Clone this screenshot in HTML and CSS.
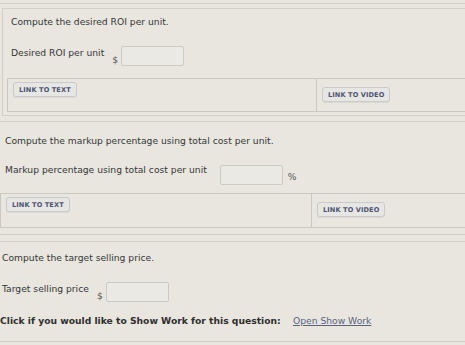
FILE: index.html
```html
<!DOCTYPE html>
<html lang="en">
<head>
  <meta charset="UTF-8" />
  <meta name="viewport" content="width=device-width, initial-scale=1" />
  <title>Question Parts</title>
  <link rel="stylesheet" href="styles.css">
</head>
<body>
  <div class="top-rule"></div>

  <div class="part part-first">
    <p class="q">Compute the desired ROI per unit.</p>
    <div class="field-row">
      <label for="roi">Desired ROI per unit</label>
      <span class="unit unit-pre">$</span>
      <input type="text" id="roi" />
    </div>
    <div class="links">
      <div class="cell cell-text"><button type="button">LINK TO TEXT</button></div>
      <div class="cell cell-video"><button type="button">LINK TO VIDEO</button></div>
    </div>
  </div>
  <div class="sep"></div>

  <div class="part part-second">
    <p class="q">Compute the markup percentage using total cost per unit.</p>
    <div class="field-row">
      <label for="markup">Markup percentage using total cost per unit</label>
      <input type="text" id="markup" class="input-markup" />
      <span class="unit unit-post">%</span>
    </div>
    <div class="links">
      <div class="cell cell-text"><button type="button">LINK TO TEXT</button></div>
      <div class="cell cell-video"><button type="button">LINK TO VIDEO</button></div>
    </div>
  </div>
  <div class="sep sep-double"></div>

  <div class="part part-third">
    <p class="q">Compute the target selling price.</p>
    <div class="field-row">
      <label for="price">Target selling price</label>
      <span class="unit unit-pre">$</span>
      <input type="text" id="price" />
    </div>
    <p class="show-work">Click if you would like to Show Work for this question: <a href="#">Open Show Work</a></p>
  </div>
  <div class="bottom-rule"></div>
</body>
</html>
```

FILE: styles.css
```css
body {
  margin: 0;
  background: #e8e6df;
  color: #363636;
  font-family: "DejaVu Sans", Verdana, sans-serif;
  font-size: 9.2px;
  line-height: 12px;
  overflow: hidden;
}
.top-rule {
  height: 3px;
  border-bottom: 1px solid #cfcfca;
}
p {
  margin: 0;
}
.part {
  padding: 0 0 0 4px;
}
.part-first {
  margin: 4px 0 0 2px;
  border: 1px solid #d0d0ca;
  border-right: none;
  padding-top: 7px;
  padding-bottom: 3px;
}
.part-second {
  padding-top: 13px;
  padding-left: 2px;
}
.part-third {
  padding-top: 10px;
  padding-left: 0;
}
.q,
.field-row {
  padding-left: 4px;
}
.part-third .q,
.part-third .field-row {
  padding-left: 2px;
}
.part-second .q,
.part-second .field-row {
  padding-left: 3px;
}
.field-row {
  display: flex;
  align-items: flex-start;
  margin-top: 18px;
}
.part-third .field-row {
  margin-top: 18px;
}
.field-row label {
  margin-top: 1px;
}
.part-second .field-row label {
  margin-top: -1px;
}
.unit {
  align-self: flex-end;
  color: #555;
}
.unit-pre {
  margin: 0 3px 0 8px;
}
.unit-post {
  align-self: center;
  margin-left: 5px;
  margin-top: 4px;
}
.part-third .unit-pre {
  margin-left: 8px;
}
input {
  width: 63px;
  height: 20px;
  box-sizing: border-box;
  margin: 0;
  border: 1px solid #cbcbc6;
  border-radius: 2px;
  background: #ebe9e3;
}
.input-markup {
  margin-left: 13px;
}
.links {
  display: flex;
  margin-top: 12px;
  border: 1px solid #c9c9c3;
  border-right: none;
  height: 32px;
}
.part-second .links {
  margin-top: 8px;
  margin-left: -2px;
  height: 33px;
}
.cell {
  padding: 3px 5px;
}
.cell-text {
  width: 298px;
  border-right: 1px solid #c9c9c3;
}
.part-second .cell-text {
  width: 300px;
}
.cell-video {
  padding-top: 8px;
}
button {
  font-family: "DejaVu Sans", Verdana, sans-serif;
  font-size: 6.6px;
  font-weight: bold;
  letter-spacing: 0.1px;
  color: #4f5370;
  background: #e6e7e5;
  border: 1px solid #cacaca;
  border-radius: 3px;
  height: 15px;
  padding: 0 5px;
  box-shadow: 0 1px 1px rgba(0,0,0,0.06);
}
.sep {
  height: 5px;
  border-bottom: 1px solid #cdcdc7;
}
.sep-double {
  margin-top: 6px;
  height: 6px;
  border-top: 1px solid #cfcfc9;
}
.show-work {
  margin-top: 13px;
  font-weight: bold;
  color: #2f2f2f;
}
.show-work a {
  margin-left: 9px;
  font-weight: normal;
  color: #5a6280;
  text-decoration: underline;
}
.bottom-rule {
  margin-top: 14px;
  border-top: 1px solid #cfcfc9;
}
```
